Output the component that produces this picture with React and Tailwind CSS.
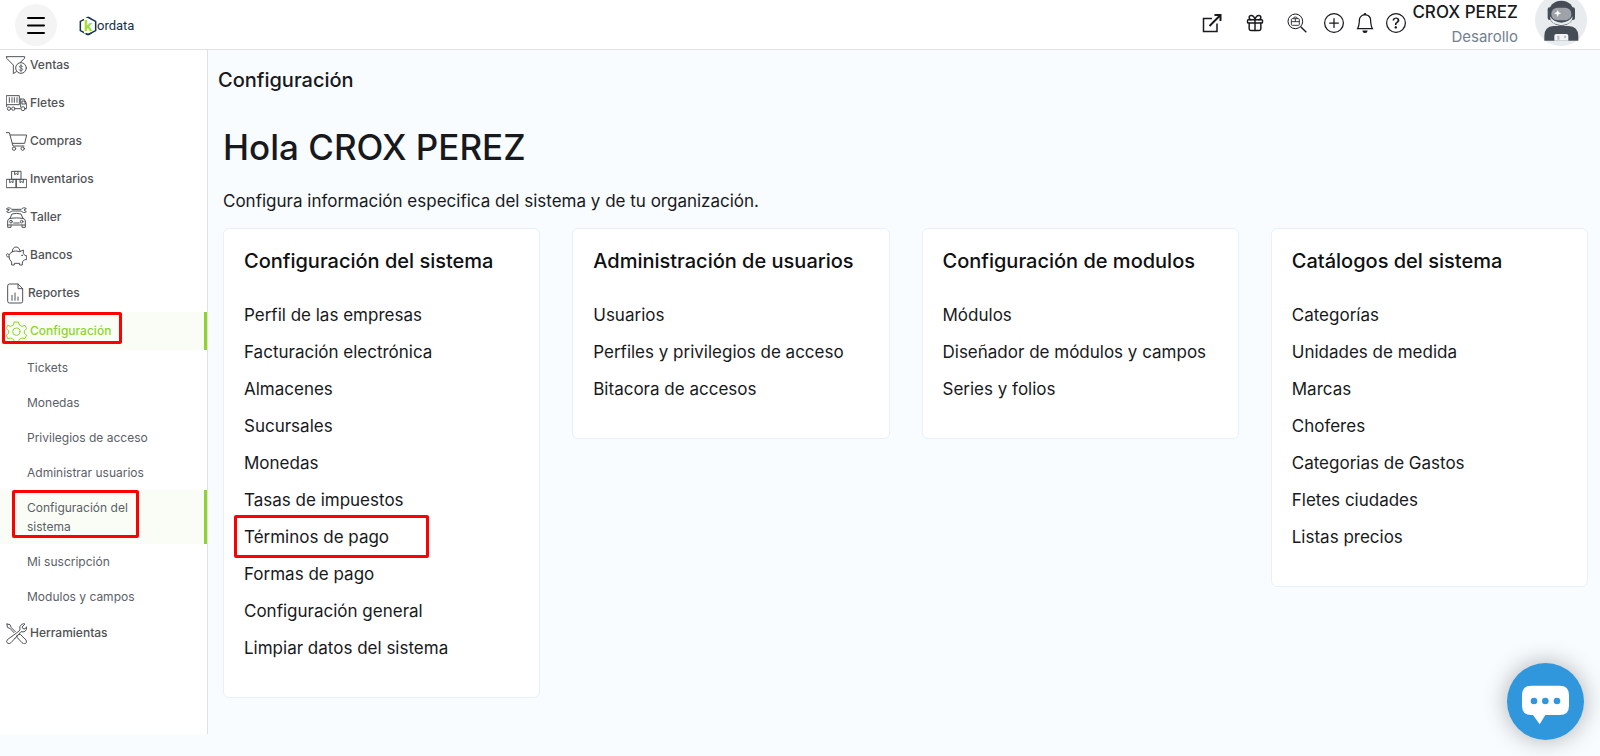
import React from "react";
import { BsBell, BsPlusCircle, BsQuestionCircle } from "react-icons/bs";
import { Gift } from "lucide-react";

function MenuIcon({ children, narrow }) {
  return (
    <svg
      viewBox={narrow ? "0 0 57 63" : "0 0 63 63"}
      className={narrow ? "h-[21px] w-[19px] shrink-0" : "h-[21px] w-[21px] shrink-0"}
      fill="none"
      stroke="currentColor"
      strokeWidth="3"
      strokeLinejoin="round"
      strokeLinecap="round"
      aria-hidden="true"
    >
      {children}
    </svg>
  );
}

const icons = {
  ventas: (
    <MenuIcon>
      <path d="M2 5h54v5L43 22M2 5v5l20 20v26l9-6" />
      <circle cx="45" cy="39" r="16" />
      <path d="M50 35c-2-4-10-4-10 0s10 4 10 8-8 5-11 1M45 29v21" strokeWidth="2.5" />
    </MenuIcon>
  ),
  fletes: (
    <MenuIcon>
      <path d="M2 8h38v27H2zM10 14v14M18 14v14M25 14v14M33 14v14M2 35v6M44 18h10l8 14v15h-4M44 18v24M49 24h6l4 9H49zM29 47h14" />
      <circle cx="9" cy="47" r="5" />
      <circle cx="22" cy="47" r="5" />
      <circle cx="51" cy="47" r="6" />
    </MenuIcon>
  ),
  compras: (
    <MenuIcon>
      <path d="M1 5h9l11 40h33M13 12h49l-6 25H19" />
      <circle cx="24" cy="53" r="5" />
      <circle cx="50" cy="53" r="5" />
    </MenuIcon>
  ),
  inventarios: (
    <MenuIcon>
      <path d="M18 7h27v24H18zM2 31h29v25H2zM31 31h31v25H31zM26 7v10l5-3 5 3V7M11 31v10l5-3 5 3V31M42 31v10l5-3 5 3V31" />
    </MenuIcon>
  ),
  taller: (
    <MenuIcon>
      <path d="M2 5c5-5 13-2 15 2h29c2-4 10-7 15-2l-7 4 7 5c-5 5-13 2-15-2H17c-2 4-10 7-15 2l7-5zM12 34l6-13q13-4 27 0l6 13M12 34q20-3 39 0M12 34q-7 2-7 8v12h53V42q0-6-7-8M23 48h17M5 54v7h10v-7M48 54v7h10v-7" />
      <circle cx="15" cy="44" r="4" />
      <circle cx="47" cy="44" r="4" />
    </MenuIcon>
  ),
  bancos: (
    <MenuIcon>
      <path d="M19 20q10-5 22 0l11-5v10l5 7h5v12h-6l-7 7v9h-8v-5H25v5h-8v-9q-9-7-8-19 2-8 10-12zM19 20q0-13 11-14 12 1 12 14M8 36Q-1 36 2 28q3-4 6 0" />
      <circle cx="48" cy="31" r="1" />
    </MenuIcon>
  ),
  reportes: (
    <MenuIcon narrow>
      <path d="M5 8q0-5 5-5h26l14 14v38q0 5-5 5H10q-5 0-5-5zM36 3v14h14M18 52V37M27 52V30M36 52V42" />
    </MenuIcon>
  ),
  configuracion: (
    <MenuIcon>
      <path d="M25 3h12l3 9 8 4 9-3 5 10-7 6v8l7 5-5 11-9-2-8 4-3 7H25l-3-7-8-4-9 2-4-11 7-5v-8l-7-6 4-10 9 3 8-4z" />
      <circle cx="31" cy="32" r="11" />
    </MenuIcon>
  ),
  herramientas: (
    <MenuIcon>
      <path d="M3 3l9 2 4 9 12 12M3 3l1 10 9 4 11 12M38 35l5-1 17 17q4 7-2 11-6 2-10-3L33 43v-6M37 26l5-5q-4-11 5-17 5-3 10-1l-9 9 3 5 6 1 5-7q2 9-5 14-6 3-12 1L26 47M37 26L4 50q-5 6 1 11 7 3 11-3l11-12" />
    </MenuIcon>
  ),
};

const mainItems = [
  ["ventas", "Ventas"],
  ["fletes", "Fletes"],
  ["compras", "Compras"],
  ["inventarios", "Inventarios"],
  ["taller", "Taller"],
  ["bancos", "Bancos"],
  ["reportes", "Reportes"],
];

const subItems = [
  "Tickets",
  "Monedas",
  "Privilegios de acceso",
  "Administrar usuarios",
  "Configuración del sistema",
  "Mi suscripción",
  "Modulos y campos",
];

const cards = [
  {
    title: "Configuración del sistema",
    links: [
      "Perfil de las empresas",
      "Facturación electrónica",
      "Almacenes",
      "Sucursales",
      "Monedas",
      "Tasas de impuestos",
      "Términos de pago",
      "Formas de pago",
      "Configuración general",
      "Limpiar datos del sistema",
    ],
  },
  {
    title: "Administración de usuarios",
    links: ["Usuarios", "Perfiles y privilegios de acceso", "Bitacora de accesos"],
  },
  {
    title: "Configuración de modulos",
    links: ["Módulos", "Diseñador de módulos y campos", "Series y folios"],
  },
  {
    title: "Catálogos del sistema",
    links: [
      "Categorías",
      "Unidades de medida",
      "Marcas",
      "Choferes",
      "Categorias de Gastos",
      "Fletes ciudades",
      "Listas precios",
    ],
  },
];

function Logo() {
  return (
    <a href="#" aria-label="kordata" className="ml-[22px] flex items-center pt-[3px] text-[#14324a]">
      <svg viewBox="0 0 54 60" className="h-5 w-[18px]" aria-hidden="true">
        <path d="M27 4L4 16v28l23 12 23-12V16z" fill="none" stroke="#14324a" strokeWidth="4.500" />
        <path d="M15 6h20v46H15z" fill="#fff" />
        <path d="M27 4l10 5M27 56l10-5M27 56l-6-3" stroke="#14324a" strokeWidth="4.500" />
        <text x="15" y="45" fontFamily="Roboto, sans-serif" fontWeight="700" fontSize="46" fill="#9be02c">
          k
        </text>
      </svg>
      <span className="font-['Roboto',sans-serif] text-[13px] leading-5">ordata</span>
    </a>
  );
}

function Avatar() {
  return (
    <svg viewBox="0 0 156 156" className="-mt-[9px] h-[52px] w-[52px]" role="img" aria-label="CROX PEREZ">
      <circle cx="78" cy="78" r="78" fill="#e9ecef" />
      <path d="M28 140v-14q0-28 28-30h44q30 2 30 30v14z" fill="#454c55" />
      <path d="M58 140v-14q0-6 6-6h30q6 0 6 6v14z" fill="#f1f3f5" />
      <path d="M67 125h6v12h-6zM87 125h6v7h-6z" fill="#b9bec4" />
      <rect x="38" y="40" width="82" height="38" rx="6" fill="#454c55" />
      <path d="M79 20q37 2 37 39 0 32-37 37-37-5-37-37 0-37 37-39z" fill="#454c55" />
      <path d="M79 86q-24-1-34-19 0 24 34 27 34-3 34-27-10 18-34 19z" fill="#e9ecef" />
      <rect x="49" y="41" width="60" height="38" rx="18" fill="#9da3a9" />
      <path d="M68 47l3 8 8 3-8 3-3 8-3-8-8-3 8-3z" fill="#fff" />
    </svg>
  );
}

function Header() {
  return (
    <header className="relative z-10 flex h-[50px] items-center border-b border-[#dfe1e4] bg-white">
      <button
        type="button"
        aria-label="Menú"
        className="ml-[15px] flex h-[42px] w-[42px] items-center justify-center rounded-full bg-[#f4f4f4] text-black"
      >
        <svg viewBox="0 0 18 18" className="h-[18px] w-[18px]" aria-hidden="true">
          <path d="M1 2h16M1 9.500h16M1 17h16" stroke="currentColor" strokeWidth="2" strokeLinecap="round" />
        </svg>
      </button>
      <Logo />
      <div className="ml-auto flex h-full items-center text-[#17191c]">
        <div className="flex items-center pb-1">
          <button type="button" aria-label="Abrir" className="mr-[23px]">
            <svg viewBox="0 0 20 20" className="h-5 w-5" fill="none" stroke="currentColor" strokeWidth="1.500">
              <path d="M10 5.500H1.500v13h13.500v-8" />
              <path d="M7.500 13L18 2.500M12.500 2H18.500V8" strokeWidth="2" />
            </svg>
          </button>
          <button type="button" aria-label="Regalos" className="mr-[22px]">
            <Gift size={20} strokeWidth={1.75} />
          </button>
          <button type="button" aria-label="Buscar" className="mr-[17px]">
            <svg viewBox="0 0 60 60" className="h-5 w-5" fill="none" stroke="currentColor" strokeWidth="3">
              <circle cx="25" cy="25" r="22" />
              <path d="M41 41l17 17" strokeWidth="4" />
              <path
                d="M13 20q0-3 3-3h18q3 0 3 3v14q0 3-3 3H16q-3 0-3-3zM13 26h24M19 17q0-5 6-5t6 5M25 17v9"
                strokeWidth="2.500"
              />
            </svg>
          </button>
          <button type="button" aria-label="Agregar" className="mr-[11px]">
            <BsPlusCircle size={20} />
          </button>
          <button type="button" aria-label="Notificaciones" className="mr-[11px]">
            <BsBell size={20} />
          </button>
          <button type="button" aria-label="Ayuda">
            <BsQuestionCircle size={20} />
          </button>
        </div>
        <div className="mr-[17px] ml-[6px] flex h-full flex-col text-right">
          <span className="text-[17px] leading-6 font-medium text-[#17191c]">CROX PEREZ</span>
          <span className="text-[15px] leading-[26px] text-[#738091]">Desarollo</span>
        </div>
        <div className="mr-[13px]">
          <Avatar />
        </div>
      </div>
    </header>
  );
}

function Highlight({ className }) {
  return (
    <span
      aria-hidden="true"
      className={"pointer-events-none absolute rounded-xs border-3 border-[#ff0000] " + className}
    />
  );
}

function Sidebar() {
  const row = "relative flex h-[38px] items-center gap-[3px] pl-[6px] text-xs font-medium";
  return (
    <nav className="-mt-1 w-[208px] shrink-0 border-r border-[#dfe1e4] bg-white pb-[82px]">
      <ul>
        {mainItems.map(([icon, label]) => (
          <li key={label}>
            <a href="#" className={row + " text-[#505255]"}>
              {icons[icon]}
              <span>{label}</span>
            </a>
          </li>
        ))}
        <li>
          <a href="#" className={row + " border-r-3 border-[#8ed42f] bg-[#fafdf6] text-[#8ed42f]"}>
            {icons.configuracion}
            <span>Configuración</span>
            <Highlight className="top-0 left-[2px] h-8 w-[120px]" />
          </a>
          <ul>
            {subItems.map((label) => {
              const current = label === "Configuración del sistema";
              return (
                <li key={label}>
                  <a
                    href="#"
                    className={
                      "relative block py-2 pr-12 pl-[27px] text-xs leading-[19px] text-[#5a6068] " +
                      (current ? "border-r-3 border-[#8ed42f] bg-[#fafdf6]" : "")
                    }
                  >
                    {label}
                    {current && <Highlight className="top-0 left-3 h-12 w-[127px]" />}
                  </a>
                </li>
              );
            })}
          </ul>
        </li>
        <li>
          <a href="#" className={row + " text-[#505255]"}>
            {icons.herramientas}
            <span>Herramientas</span>
          </a>
        </li>
      </ul>
    </nav>
  );
}

function Card({ title, links }) {
  return (
    <section className="rounded-md border border-[#e8f1fb] bg-white px-5 pt-[18px] pb-[30px]">
      <h3 className="text-xl leading-[28px] font-medium text-[#0f1012]">{title}</h3>
      <ul className="mt-[22px]">
        {links.map((label) => (
          <li key={label} className="relative">
            <a href="#" className="block text-[17px] leading-[37px] text-[#17191c]">
              {label}
            </a>
            {label === "Términos de pago" && <Highlight className="-top-1 -left-[10px] h-[43px] w-[195px]" />}
          </li>
        ))}
      </ul>
    </section>
  );
}

export default function App() {
  return (
    <div className="min-h-screen bg-[#f9fcff] font-['Inter',sans-serif] text-[#17191c]">
      <Header />
      <div className="flex items-start">
        <Sidebar />
        <main className="flex-1 pr-3 pl-[15px]">
          <h2 className="-ml-[5px] pt-4 text-xl leading-[28px] font-medium">Configuración</h2>
          <h1 className="mt-[29px] text-[35px] leading-12 font-medium">Hola CROX PEREZ</h1>
          <p className="mt-[18px] text-[17px] leading-6">
            Configura información especifica del sistema y de tu organización.
          </p>
          <div className="mt-[15px] grid grid-cols-4 items-start gap-8">
            {cards.map((card) => (
              <Card key={card.title} {...card} />
            ))}
          </div>
        </main>
      </div>
      <button
        type="button"
        aria-label="Chat"
        className="fixed right-4 bottom-4 h-[77px] w-[77px] rounded-full bg-[#3197dc] shadow-[0_0_24px_rgba(0,0,0,0.3)]"
      >
        <svg viewBox="0 0 231 231" className="h-full w-full" aria-hidden="true">
          <path
            d="M73 68h85q28 0 28 28v32q0 28-28 28h-43l-17 28-20-28h-5q-28 0-28-28V96q0-28 28-28z"
            fill="#fff"
          />
          <g fill="#3197dc">
            <circle cx="81" cy="114" r="10" />
            <circle cx="115" cy="114" r="10" />
            <circle cx="150" cy="114" r="10" />
          </g>
        </svg>
      </button>
    </div>
  );
}
